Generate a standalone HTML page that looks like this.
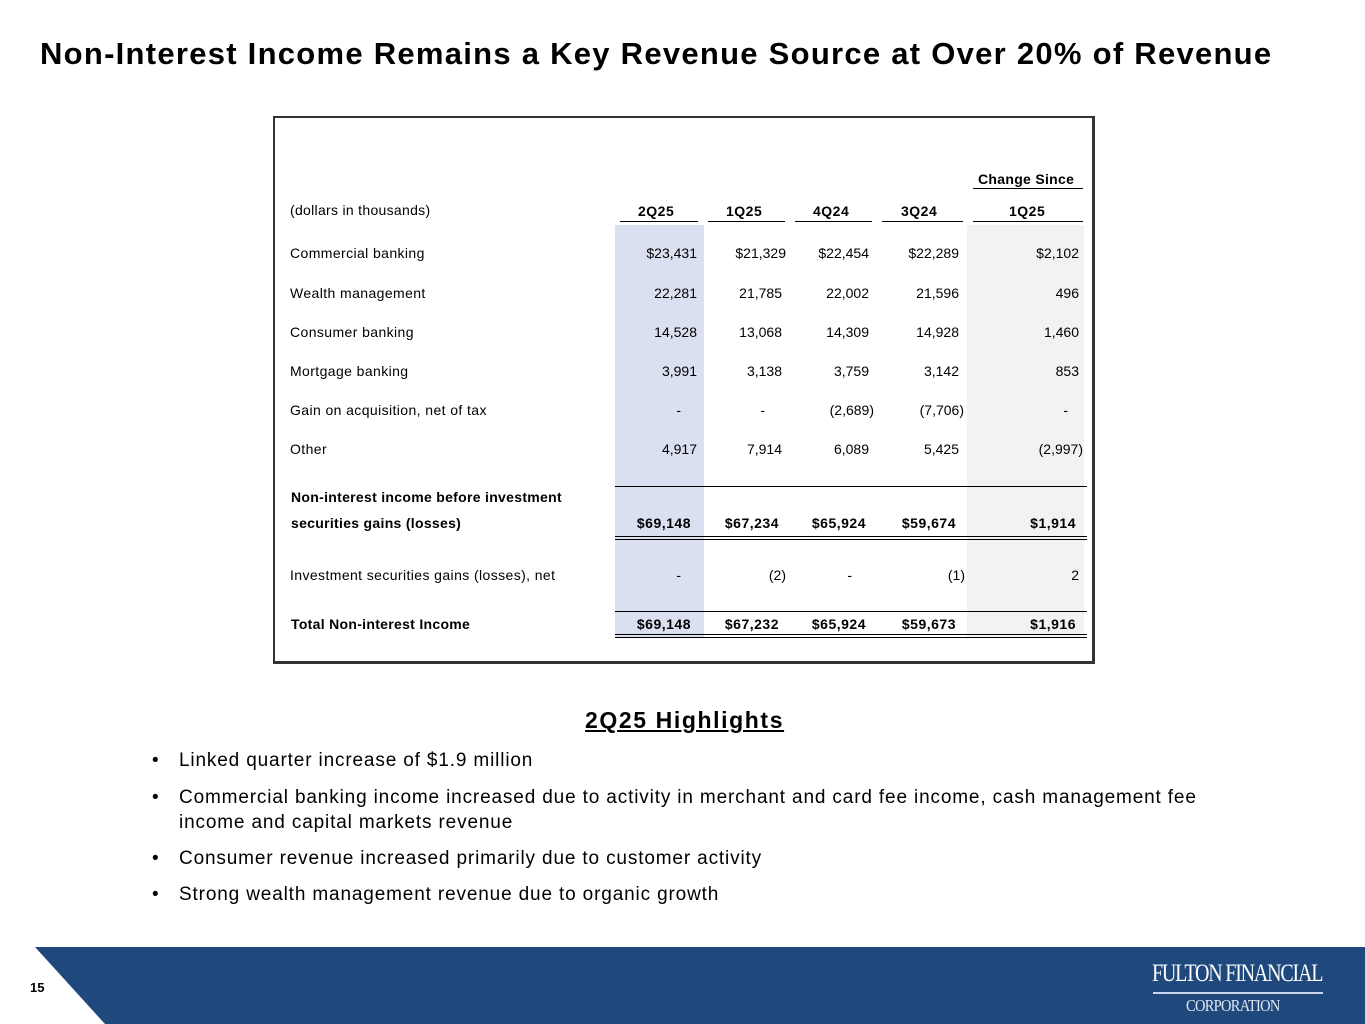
<!DOCTYPE html>
<html><head><meta charset="utf-8"><style>
*{margin:0;padding:0;box-sizing:border-box}
body{width:1365px;height:1024px;position:relative;background:#fff;font-family:"Liberation Sans",sans-serif;color:#000;overflow:hidden}
.a{position:absolute;white-space:nowrap;line-height:18px}
.t{font-size:14px}
.b{font-weight:bold}
.r{position:absolute;width:110px;text-align:right;font-size:14px;line-height:18px;white-space:nowrap}
.ln{position:absolute;height:1px;background:#000}
.bl{position:absolute;font-size:19px;line-height:24px;white-space:nowrap;letter-spacing:0.85px}
</style></head><body>
<div class="a b" style="left:40px;top:36px;font-size:31px;line-height:36px;letter-spacing:1.27px">Non-Interest Income Remains a Key Revenue Source at Over 20% of Revenue</div>

<div style="position:absolute;left:273px;top:116px;width:822px;height:548px;border:2px solid #333;border-right-width:3px;border-bottom-width:3px"></div>
<div style="position:absolute;left:615px;top:225px;width:89px;height:413px;background:#dae0f0"></div>
<div style="position:absolute;left:967px;top:225px;width:117px;height:413px;background:#f2f2f2"></div>

<div class="a t b" style="left:978px;top:170px;letter-spacing:0.3px">Change Since</div>
<div class="ln" style="left:973px;top:188px;width:110px"></div>
<div class="a t" style="left:290px;top:201px;letter-spacing:0.3px">(dollars in thousands)</div>
<div class="a t b" style="left:638px;top:202px;letter-spacing:0.5px">2Q25</div>
<div class="a t b" style="left:726px;top:202px;letter-spacing:0.5px">1Q25</div>
<div class="a t b" style="left:813px;top:202px;letter-spacing:0.5px">4Q24</div>
<div class="a t b" style="left:901px;top:202px;letter-spacing:0.5px">3Q24</div>
<div class="a t b" style="left:1009px;top:202px;letter-spacing:0.5px">1Q25</div>
<div class="ln" style="left:620px;top:221px;width:78px"></div>
<div class="ln" style="left:708px;top:221px;width:77px"></div>
<div class="ln" style="left:795px;top:221px;width:77px"></div>
<div class="ln" style="left:882px;top:221px;width:81px"></div>
<div class="ln" style="left:973px;top:221px;width:110px"></div>

<div class="a t" style="left:290px;top:244px;letter-spacing:0.4px">Commercial banking</div>
<div class="r" style="left:587px;top:244px">$23,431</div><div class="r" style="left:676px;top:244px">$21,329</div><div class="r" style="left:759px;top:244px">$22,454</div><div class="r" style="left:849px;top:244px">$22,289</div><div class="r" style="left:969px;top:244px">$2,102</div>
<div class="a t" style="left:290px;top:284px;letter-spacing:0.4px">Wealth management</div>
<div class="r" style="left:587px;top:284px">22,281</div><div class="r" style="left:672px;top:284px">21,785</div><div class="r" style="left:759px;top:284px">22,002</div><div class="r" style="left:849px;top:284px">21,596</div><div class="r" style="left:969px;top:284px">496</div>
<div class="a t" style="left:290px;top:323px;letter-spacing:0.4px">Consumer banking</div>
<div class="r" style="left:587px;top:323px">14,528</div><div class="r" style="left:672px;top:323px">13,068</div><div class="r" style="left:759px;top:323px">14,309</div><div class="r" style="left:849px;top:323px">14,928</div><div class="r" style="left:969px;top:323px">1,460</div>
<div class="a t" style="left:290px;top:362px;letter-spacing:0.4px">Mortgage banking</div>
<div class="r" style="left:587px;top:362px">3,991</div><div class="r" style="left:672px;top:362px">3,138</div><div class="r" style="left:759px;top:362px">3,759</div><div class="r" style="left:849px;top:362px">3,142</div><div class="r" style="left:969px;top:362px">853</div>
<div class="a t" style="left:290px;top:401px;letter-spacing:0.4px">Gain on acquisition, net of tax</div>
<div class="r" style="left:571px;top:401px">-</div><div class="r" style="left:655px;top:401px">-</div><div class="r" style="left:764px;top:401px">(2,689)</div><div class="r" style="left:854px;top:401px">(7,706)</div><div class="r" style="left:958px;top:401px">-</div>
<div class="a t" style="left:290px;top:440px;letter-spacing:0.4px">Other</div>
<div class="r" style="left:587px;top:440px">4,917</div><div class="r" style="left:672px;top:440px">7,914</div><div class="r" style="left:759px;top:440px">6,089</div><div class="r" style="left:849px;top:440px">5,425</div><div class="r" style="left:973px;top:440px">(2,997)</div>

<div class="ln" style="left:615px;top:486px;width:472px"></div>
<div class="a t b" style="left:291px;top:488px;letter-spacing:0.3px">Non-interest income before investment</div>
<div class="a t b" style="left:291px;top:514px;letter-spacing:0.3px">securities gains (losses)</div>
<div class="r b" style="left:581px;top:514px;letter-spacing:0.5px">$69,148</div><div class="r b" style="left:669px;top:514px;letter-spacing:0.5px">$67,234</div><div class="r b" style="left:756px;top:514px;letter-spacing:0.5px">$65,924</div><div class="r b" style="left:846px;top:514px;letter-spacing:0.5px">$59,674</div><div class="r b" style="left:966px;top:514px;letter-spacing:0.5px">$1,914</div>
<div class="ln" style="left:615px;top:536px;width:472px"></div>
<div class="ln" style="left:615px;top:539px;width:472px"></div>

<div class="a t" style="left:290px;top:566px;letter-spacing:0.4px">Investment securities gains (losses), net</div>
<div class="r" style="left:571px;top:566px">-</div><div class="r" style="left:676px;top:566px">(2)</div><div class="r" style="left:742px;top:566px">-</div><div class="r" style="left:855px;top:566px">(1)</div><div class="r" style="left:969px;top:566px">2</div>
<div class="ln" style="left:615px;top:611px;width:472px"></div>
<div class="a t b" style="left:291px;top:615px;letter-spacing:0.3px">Total Non-interest Income</div>
<div class="r b" style="left:581px;top:615px;letter-spacing:0.5px">$69,148</div><div class="r b" style="left:669px;top:615px;letter-spacing:0.5px">$67,232</div><div class="r b" style="left:756px;top:615px;letter-spacing:0.5px">$65,924</div><div class="r b" style="left:846px;top:615px;letter-spacing:0.5px">$59,673</div><div class="r b" style="left:966px;top:615px;letter-spacing:0.5px">$1,916</div>
<div class="ln" style="left:615px;top:634px;width:472px"></div>
<div class="ln" style="left:615px;top:637px;width:472px"></div>

<div class="a b" style="left:585px;top:706px;font-size:23px;line-height:28px;letter-spacing:1.6px;text-decoration:underline">2Q25 Highlights</div>
<div class="bl" style="left:152px;top:749px">•</div><div class="bl" style="left:179px;top:749px">Linked quarter increase of $1.9 million</div>
<div class="bl" style="left:152px;top:786px">•</div><div class="bl" style="left:179px;top:786px">Commercial banking income increased due to activity in merchant and card fee income, cash management fee</div>
<div class="bl" style="left:179px;top:811px">income and capital markets revenue</div>
<div class="bl" style="left:152px;top:847px">•</div><div class="bl" style="left:179px;top:847px">Consumer revenue increased primarily due to customer activity</div>
<div class="bl" style="left:152px;top:883px">•</div><div class="bl" style="left:179px;top:883px">Strong wealth management revenue due to organic growth</div>

<svg style="position:absolute;left:0;top:947px" width="1365" height="77"><polygon points="35,0 1365,0 1365,77 105,77" fill="#1f497d"/></svg>
<div class="a b" style="left:30px;top:979px;font-size:13px">15</div>
<div class="a" style="left:1152px;top:960px;font-family:'Liberation Serif',serif;color:#fff;font-size:25px;line-height:28px;letter-spacing:-1.5px;transform:scaleX(0.8);transform-origin:left">FULTON FINANCIAL</div>
<div style="position:absolute;left:1153px;top:992px;width:170px;height:2px;background:#c8d4e8"></div>
<div class="a" style="left:1186px;top:996px;font-family:'Liberation Serif',serif;color:#e0e6f0;font-size:17px;line-height:20px;letter-spacing:-0.8px;transform:scaleX(0.85);transform-origin:left">CORPORATION</div>
</body></html>
